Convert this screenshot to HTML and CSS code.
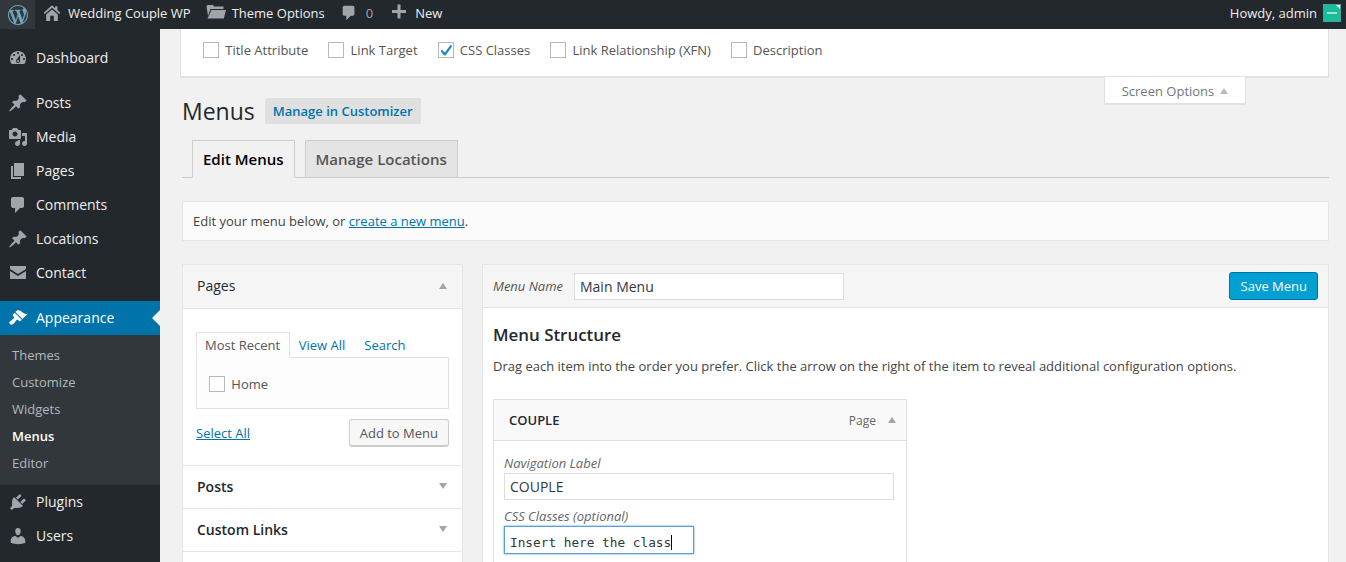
FILE: index.html
```html
<!DOCTYPE html>
<html lang="en">
<head>
    <meta charset="UTF-8">
    <title>Menus - Wedding Couple WP</title>
    <link rel="stylesheet" href="styles.css">
</head>
<body>
    <div class="adminbar">
        <div class="bar-logo">
            <svg class="wp-logo" viewBox="0 0 20 20"><path d="M20 10c0-5.51-4.49-10-10-10C4.48 0 0 4.49 0 10c0 5.52 4.48 10 10 10 5.51 0 10-4.48 10-10zM7.78 15.37L4.37 6.22c.55-.02 1.17-.08 1.17-.08.5-.06.44-1.13-.06-1.11 0 0-1.45.11-2.37.11-.18 0-.37 0-.58-.01C4.12 2.69 6.87 1.11 10 1.11c2.33 0 4.45.87 6.05 2.34-.68-.11-1.65.39-1.65 1.58 0 .74.45 1.36.9 2.1.35.61.55 1.36.55 2.46 0 1.49-1.4 5-1.4 5l-3.03-8.37c.54-.02.82-.17.82-.17.5-.05.44-1.25-.06-1.22 0 0-1.44.12-2.38.12-.87 0-2.33-.12-2.33-.12-.5-.03-.56 1.2-.06 1.22l.92.08 1.26 3.41zM17.41 10c.24-.64.74-1.87.43-4.25.7 1.29 1.05 2.71 1.05 4.25 0 3.29-1.73 6.24-4.4 7.78.97-2.59 1.94-5.2 2.92-7.78zM6.1 18.09C3.12 16.65 1.11 13.53 1.11 10c0-1.3.23-2.48.72-3.59C3.25 10.3 4.67 14.2 6.1 18.09zm4.03-6.63l2.58 6.98c-.86.29-1.76.45-2.71.45-.79 0-1.57-.11-2.29-.33.81-2.38 1.62-4.74 2.42-7.1z"/></svg>
        </div>
        <div class="bar-item">
            <svg class="bar-icon" viewBox="0 0 20 20"><path d="M10 1.5L.8 9.6 2 11l8-6.9 8 6.9 1.2-1.4-3.2-2.8V2.5h-2.5v2.1zM3.5 11.6L10 6l6.5 5.6V19H12v-6H8v6H3.500z"/></svg>
            <span>Wedding Couple WP</span>
        </div>
        <div class="bar-item bar-item-folder">
            <svg class="bar-icon bar-icon-big" viewBox="0 0 20 20"><path d="M.5 3.5l1-1.500h5.500l1 1.500h9.500v2.500H4.500L2 13zM5.500 7H20l-2.200 8.500H1.500z"/></svg>
            <span>Theme Options</span>
        </div>
        <div class="bar-item bar-item-comments">
            <svg class="bar-icon" viewBox="0 0 20 20"><path d="M5 2h9c1.100 0 2 .9 2 2v7c0 1.100-.9 2-2 2h-2l-5 5v-5H5c-1.100 0-2-.9-2-2V4c0-1.100.9-2 2-2z"/></svg>
            <span class="bar-count">0</span>
        </div>
        <div class="bar-item bar-item-new">
            <svg class="bar-icon bar-icon-big" viewBox="0 0 20 20"><path d="M17 7v3h-5.500v5.500h-3V10H3V7h5.500V1.500h3V7z"/></svg>
            <span>New</span>
        </div>
        <div class="bar-user">
            <span>Howdy, admin</span>
            <div class="avatar"><div class="avatar-mark"></div></div>
        </div>
    </div>

    <div class="layout">
        <div class="sidebar">
            <div class="menu-group">
                <div class="menu-item">
                    <svg class="menu-icon" viewBox="0 0 20 20"><path d="M3.760 16h12.480c1.100-1.370 1.760-3.110 1.760-5 0-4.420-3.580-8-8-8s-8 3.580-8 8c0 1.890.66 3.630 1.760 5zM10 4c.55 0 1 .45 1 1s-.45 1-1 1-1-.45-1-1 .45-1 1-1zM6 6c.55 0 1 .45 1 1s-.45 1-1 1-1-.45-1-1 .45-1 1-1zm8 0c.55 0 1 .45 1 1s-.45 1-1 1-1-.45-1-1 .45-1 1-1zm-5.370 5.550L12 7v6c0 1.100-.9 2-2 2s-2-.9-2-2c0-.57.24-1.080.63-1.450zM4 10c.55 0 1 .45 1 1s-.45 1-1 1-1-.45-1-1 .45-1 1-1zm12 0c.55 0 1 .45 1 1s-.45 1-1 1-1-.45-1-1 .45-1 1-1zm-5 3c0-.55-.45-1-1-1s-1 .45-1 1 .45 1 1 1 1-.45 1-1z"/></svg>
                    <span>Dashboard</span>
                </div>
            </div>
            <div class="menu-group">
                <div class="menu-item">
                    <svg class="menu-icon" viewBox="0 0 20 20"><path d="M10.440 3.020l1.820-1.820 6.360 6.350-1.830 1.820c-1.050-.68-2.480-.57-3.410.36l-.75.75c-.92.93-1.040 2.350-.35 3.410l-1.830 1.820-2.410-2.410-2.800 2.790c-.42.42-3.380 2.710-3.800 2.290s1.860-3.390 2.280-3.810l2.790-2.790L4.100 9.360l1.830-1.820c1.050.69 2.480.57 3.400-.36l.75-.75c.93-.92 1.050-2.350.36-3.410z"/></svg>
                    <span>Posts</span>
                </div>
                <div class="menu-item">
                    <svg class="menu-icon" viewBox="0 0 20 20"><path d="M13 11V4c0-.55-.45-1-1-1h-1.670L9 1H5L3.670 3H2c-.55 0-1 .45-1 1v7c0 .55.45 1 1 1h10c.55 0 1-.45 1-1zM7 4.500c1.380 0 2.500 1.120 2.500 2.500S8.380 9.500 7 9.500 4.500 8.380 4.500 7 5.620 4.500 7 4.500zM14 6h5v10.500c0 1.380-1.120 2.500-2.500 2.500S14 17.880 14 16.500s1.120-2.500 2.500-2.500c.17 0 .34.02.5.05V9h-3V6zm-4 8.050V13h2v3.500c0 1.380-1.120 2.500-2.500 2.500S7 17.880 7 16.500 8.120 14 9.500 14c.17 0 .34.02.5.05z"/></svg>
                    <span>Media</span>
                </div>
                <div class="menu-item">
                    <svg class="menu-icon" viewBox="0 0 20 20"><path d="M6 15V2h10v13H6zm-1 1h8v2H3V5h2v11z"/></svg>
                    <span>Pages</span>
                </div>
                <div class="menu-item">
                    <svg class="menu-icon" viewBox="0 0 20 20"><path d="M5 2h9c1.100 0 2 .9 2 2v7c0 1.100-.9 2-2 2h-2l-5 5v-5H5c-1.100 0-2-.9-2-2V4c0-1.100.9-2 2-2z"/></svg>
                    <span>Comments</span>
                </div>
                <div class="menu-item">
                    <svg class="menu-icon" viewBox="0 0 20 20"><path d="M10.440 3.020l1.820-1.820 6.360 6.350-1.830 1.820c-1.050-.68-2.480-.57-3.410.36l-.75.75c-.92.93-1.040 2.350-.35 3.410l-1.830 1.820-2.410-2.410-2.800 2.790c-.42.42-3.380 2.710-3.800 2.290s1.860-3.390 2.280-3.810l2.790-2.790L4.100 9.360l1.830-1.820c1.050.69 2.480.57 3.400-.36l.75-.75c.93-.92 1.050-2.350.36-3.410z"/></svg>
                    <span>Locations</span>
                </div>
                <div class="menu-item">
                    <svg class="menu-icon" viewBox="0 0 20 20"><path d="M2 3h16v3l-8 5-8-5zM2 8l8 5 8-5v8H2z"/></svg>
                    <span>Contact</span>
                </div>
            </div>
            <div class="menu-item menu-current">
                <svg class="menu-icon" viewBox="0 0 20 20"><path d="M14.480 11.060L7.410 3.990l1.500-1.500c.5-.56 2.300-.47 3.510.32 1.210.8 1.430 1.280 2.910 2.100 1.180.64 2.450 1.260 4.450.85zm-.71.71L6.700 4.700 4.930 6.470c-.39.39-.39 1.020 0 1.410l1.060 1.060c.39.39.39 1.030 0 1.420-.6.6-1.430 1.110-2.210 1.690-.35.26-.7.53-1.010.84C1.430 13.230.76 14.820 1.960 16c1.200 1.200 2.770.54 4.120-.82.31-.31.58-.66.84-1.010.58-.78 1.090-1.610 1.690-2.210.39-.39 1.030-.39 1.420 0l1.060 1.060c.39.39 1.020.39 1.410 0z"/></svg>
                <span>Appearance</span>
            </div>
            <div class="submenu">
                <div class="sub-item">Themes</div>
                <div class="sub-item">Customize</div>
                <div class="sub-item">Widgets</div>
                <div class="sub-item sub-current">Menus</div>
                <div class="sub-item">Editor</div>
            </div>
            <div class="menu-item">
                <svg class="menu-icon" viewBox="0 0 20 20"><path d="M13.110 4.360L9.870 7.600 8 5.730l3.240-3.240c.35-.34 1.050-.2 1.560.32.52.51.66 1.210.31 1.550zm-8 1.770l.91-1.120 9.010 9.010-1.190.84c-.71.71-2.630 1.160-3.820 1.160H6.140L4.900 17.260c-.59.59-1.540.59-2.120 0-.59-.58-.59-1.530 0-2.120l1.240-1.240v-3.880c0-1.130.4-3.190 1.090-3.890zm7.260 3.970l3.240-3.240c.34-.35 1.040-.21 1.550.31.52.51.66 1.210.31 1.550l-3.240 3.250z"/></svg>
                <span>Plugins</span>
            </div>
            <div class="menu-item">
                <svg class="menu-icon" viewBox="0 0 20 20"><path d="M10 9.250c-2.270 0-2.730-3.440-2.730-3.440C7 4.020 7.820 2 9.970 2c2.160 0 2.980 2.020 2.710 3.810 0 0-.41 3.440-2.680 3.440zm0 2.570L12.720 10c2.390 0 4.520 2.330 4.520 4.530v2.490s-3.650 1.130-7.240 1.130c-3.650 0-7.240-1.130-7.240-1.130v-2.490c0-2.250 1.940-4.480 4.470-4.480z"/></svg>
                <span>Users</span>
            </div>
        </div>

        <div class="content">
            <div class="screen-meta">
                <div class="check-row">
                    <label class="check-label"><span class="checkbox"></span>Title Attribute</label>
                    <label class="check-label"><span class="checkbox"></span>Link Target</label>
                    <label class="check-label">
                        <span class="checkbox">
                            <svg class="tick" viewBox="0 0 16 16"><path d="M12.600 2.800l1.700 1.200-6.700 9.400H6.200L2.600 9.200 4 7.800l2.900 2.600z"/></svg>
                        </span>CSS Classes
                    </label>
                    <label class="check-label"><span class="checkbox"></span>Link Relationship (XFN)</label>
                    <label class="check-label"><span class="checkbox"></span>Description</label>
                </div>
            </div>
            <div class="screen-tab-row">
                <div class="screen-tab">Screen Options<span class="arrow-up arrow-light"></span></div>
            </div>

            <div class="wrap">
                <div class="title-row">
                    <h1>Menus</h1>
                    <a class="title-action">Manage in Customizer</a>
                </div>
                <div class="nav-tabs">
                    <div class="nav-tab nav-tab-active">Edit Menus</div>
                    <div class="nav-tab">Manage Locations</div>
                </div>
                <div class="notice">Edit your menu below, or <a class="link">create a new menu</a>.</div>

                <div class="columns">
                    <div class="col-left">
                        <div class="acc-head acc-open">
                            <span>Pages</span><span class="arrow-up"></span>
                        </div>
                        <div class="acc-body">
                            <div class="tabs">
                                <div class="tab tab-active">Most Recent</div>
                                <div class="tab tab-link">View All</div>
                                <div class="tab tab-link">Search</div>
                            </div>
                            <div class="tab-panel">
                                <label class="check-label"><span class="checkbox"></span>Home</label>
                            </div>
                            <div class="acc-actions">
                                <a class="link">Select All</a>
                                <div class="btn">Add to Menu</div>
                            </div>
                        </div>
                        <div class="acc-head">
                            <span>Posts</span><span class="arrow-down"></span>
                        </div>
                        <div class="acc-head">
                            <span>Custom Links</span><span class="arrow-down"></span>
                        </div>
                        <div class="acc-rest"></div>
                    </div>

                    <div class="col-right">
                        <div class="menu-head">
                            <span class="menu-name-label">Menu Name</span>
                            <div class="field field-name">Main Menu</div>
                            <div class="btn-primary">Save Menu</div>
                        </div>
                        <div class="menu-body">
                            <h3>Menu Structure</h3>
                            <p class="hint">Drag each item into the order you prefer. Click the arrow on the right of the item to reveal additional configuration options.</p>
                            <div class="item">
                                <div class="item-bar">
                                    <span class="item-title">COUPLE</span>
                                    <span class="item-type">Page</span>
                                    <span class="arrow-up"></span>
                                </div>
                                <div class="item-settings">
                                    <div class="field-label">Navigation Label</div>
                                    <div class="field field-wide">COUPLE</div>
                                    <div class="field-label field-label-second">CSS Classes (optional)</div>
                                    <div class="field field-focus"><span class="caret">Insert here the class</span></div>
                                </div>
                            </div>
                        </div>
                    </div>
                </div>
            </div>
        </div>
    </div>
</body>
</html>
```
FILE: styles.css
```css
* {
    padding: 0px;
    margin: 0px;
    box-sizing: border-box;
}
html, body {
    height: 562px;
    overflow: hidden;
}
body {
    background-color: #f1f1f1;
    color: #444;
    font-family: "Open Sans", sans-serif;
    font-size: 13px;
}

/* top bar */
.adminbar {
    height: 29px;
    background-color: #23282d;
    color: #eee;
    display: flex;
    align-items: flex-start;
    font-size: 13px;
}
.bar-logo {
    width: 35px;
    height: 29px;
    background-color: #32373c;
    display: flex;
    align-items: center;
    justify-content: center;
    margin-right: 8px;
}
.wp-logo {
    width: 20px;
    height: 20px;
    fill: #6ea7bd;
}
.bar-item {
    height: 26px;
    display: flex;
    align-items: center;
    gap: 7px;
    margin-right: 15px;
}
.bar-item-folder {
    gap: 6px;
}
.bar-item-comments {
    gap: 8px;
    margin-right: 16px;
}
.bar-item-new {
    gap: 6px;
}
.bar-icon {
    width: 18px;
    height: 18px;
    fill: #a0a5aa;
}
.bar-icon-big {
    width: 20px;
    height: 20px;
}
.bar-count {
    color: #a0a5aa;
}
.bar-user {
    height: 26px;
    margin-left: auto;
    margin-right: 5px;
    display: flex;
    align-items: center;
    gap: 6px;
}
.avatar {
    width: 18px;
    height: 18px;
    background-color: #1abc9c;
    border: 1px solid #3fa892;
    display: flex;
    align-items: center;
    justify-content: center;
    position: relative;
}
.avatar::after {
    content: "";
    position: absolute;
    top: 0px;
    right: 0px;
    border-top: 4px solid #fff;
    border-left: 4px solid transparent;
}
.avatar-mark {
    width: 10px;
    height: 2px;
    background-color: #9fe3d2;
}

/* left menu */
.layout {
    display: flex;
    height: 533px;
}
.sidebar {
    width: 160px;
    flex-shrink: 0;
    background-color: #23282d;
    padding-top: 12px;
}
.menu-group {
    margin-bottom: 11px;
}
.menu-item {
    height: 34px;
    display: flex;
    align-items: center;
    color: #eee;
    font-size: 14px;
    padding-left: 8px;
    position: relative;
}
.menu-item span {
    padding-bottom: 2px;
}
.menu-icon {
    width: 20px;
    height: 20px;
    fill: #a0a5aa;
    margin-right: 8px;
}
.menu-current {
    background-color: #0073aa;
    color: #fff;
}
.menu-current .menu-icon {
    fill: #fff;
}
.menu-current::after {
    content: "";
    position: absolute;
    right: 0px;
    top: 9px;
    border: 8px solid transparent;
    border-right-color: #f1f1f1;
    border-left-width: 0px;
}
.submenu {
    background-color: #32373c;
    padding: 7px 0px 8px;
}
.sub-item {
    height: 27px;
    line-height: 27px;
    padding-left: 12px;
    color: #b4b9be;
    font-size: 13px;
}
.sub-current {
    color: #fff;
    font-weight: 600;
}

/* screen options */
.content {
    flex: 1;
    min-width: 0;
    padding: 0px 17px 0px 20px;
}
.screen-meta {
    height: 49px;
    background-color: #fff;
    border: 1px solid #e1e1e1;
    border-top: none;
    border-bottom-width: 2px;
    padding: 0px 22px 5px;
    display: flex;
    align-items: center;
}
.check-row {
    display: flex;
    gap: 20px;
}
.check-label {
    display: flex;
    align-items: center;
    gap: 6.3px;
    color: #555;
}
.checkbox {
    width: 16px;
    height: 16px;
    background-color: #fff;
    border: 1px solid #b4b9be;
    position: relative;
    display: block;
    flex-shrink: 0;
}
.tick {
    width: 16px;
    height: 16px;
    fill: #1e8cbe;
    position: absolute;
    left: -1px;
    top: -1px;
}
.screen-tab-row {
    display: flex;
    justify-content: flex-end;
    height: 0px;
    padding-right: 83px;
}
.screen-tab {
    width: 142px;
    height: 28px;
    background-color: #fff;
    border: 1px solid #e1e1e1;
    border-top: none;
    border-bottom-width: 2px;
    margin-top: -1px;
    padding-top: 2px;
    color: #72777c;
    display: flex;
    align-items: center;
    justify-content: center;
    gap: 6px;
}
.arrow-up {
    width: 0px;
    height: 0px;
    border: 4px solid transparent;
    border-top: none;
    border-bottom: 6px solid #a0a5aa;
}
.arrow-light {
    border-bottom-color: #b4b9be;
}
.arrow-down {
    width: 0px;
    height: 0px;
    border: 4px solid transparent;
    border-bottom: none;
    border-top: 6px solid #a0a5aa;
}

/* page heading */
.wrap {
    padding-left: 2px;
}
.title-row {
    display: flex;
    align-items: center;
    gap: 10px;
    height: 26px;
    margin-top: 20px;
}
h1 {
    font-size: 23px;
    font-weight: 400;
    color: #23282d;
}
.title-action {
    height: 26px;
    line-height: 26px;
    padding: 0px 8px;
    background-color: #e0e0e0;
    color: #0073aa;
    font-weight: 600;
    border-radius: 2px;
}
.nav-tabs {
    display: flex;
    gap: 10px;
    margin-top: 16px;
    padding-left: 10px;
    height: 38px;
    border-bottom: 1px solid #ccc;
}
.nav-tab {
    height: 38px;
    line-height: 37px;
    padding: 0px 10px;
    background-color: #e4e4e4;
    border: 1px solid #ccc;
    color: #555;
    font-size: 15px;
    font-weight: 600;
}
.nav-tab-active {
    background-color: #f1f1f1;
    border-bottom-color: #f1f1f1;
    color: #000;
}
.notice {
    margin-top: 23px;
    height: 40px;
    line-height: 38px;
    background-color: #fbfbfb;
    border: 1px solid #e5e5e5;
    padding-left: 10px;
}
.link {
    color: #0073aa;
    text-decoration: underline;
}

/* two columns */
.columns {
    display: flex;
    gap: 19px;
    margin-top: 23px;
    align-items: flex-start;
}
.col-left {
    width: 281px;
    flex-shrink: 0;
    background-color: #fff;
    border: 1px solid #e5e5e5;
    border-bottom: none;
}
.acc-head {
    height: 43px;
    display: flex;
    align-items: center;
    justify-content: space-between;
    padding: 0px 15px 2px 14px;
    font-size: 14px;
    font-weight: 600;
    color: #23282d;
    border-bottom: 1px solid #e5e5e5;
}
.acc-open {
    height: 44px;
    background-color: #f5f5f5;
    font-weight: 400;
}
.acc-rest {
    height: 20px;
}
.acc-body {
    height: 157px;
    padding: 23px 13px 0px;
    border-bottom: 1px solid #e5e5e5;
}
.tabs {
    display: flex;
    height: 25px;
}
.tab {
    padding: 0px 9.5px;
    line-height: 27px;
}
.tab-active {
    padding: 0px 9px 0px 8px;
    margin-right: -1px;
    line-height: 25px;
    border: 1px solid #e1e1e1;
    border-bottom-color: #fdfdfd;
    background-color: #fdfdfd;
    color: #555;
    position: relative;
    height: 26px;
    z-index: 1;
}
.tab-link {
    color: #0073aa;
}
.tab-panel {
    height: 52px;
    background-color: #fdfdfd;
    border: 1px solid #e1e1e1;
    padding-left: 12px;
    padding-top: 2px;
    display: flex;
    align-items: center;
}
.acc-actions {
    display: flex;
    align-items: center;
    justify-content: space-between;
    margin-top: 10px;
}
.btn {
    height: 28px;
    line-height: 26px;
    padding: 0px 10px;
    background-color: #f7f7f7;
    border: 1px solid #ccc;
    border-bottom-width: 2px;
    border-radius: 3px;
    color: #555;
}
.col-right {
    flex: 1;
    min-width: 0;
    height: 320px;
    background-color: #fff;
    border: 1px solid #e5e5e5;
}
.menu-head {
    height: 43px;
    background-color: #f5f5f5;
    border-bottom: 1px solid #e5e5e5;
    display: flex;
    align-items: center;
    padding: 0px 10px;
}
.menu-name-label {
    font-style: italic;
    color: #555;
    width: 81px;
}
.field {
    height: 27px;
    line-height: 25px;
    background-color: #fff;
    border: 1px solid #ddd;
    padding: 0px 5px;
    font-size: 14px;
    color: #32373c;
}
.field-name {
    width: 270px;
}
.btn-primary {
    margin-left: auto;
    height: 28px;
    line-height: 26px;
    padding: 0px 10px 0px 11px;
    background-color: #00a0d2;
    border: 1px solid #0073aa;
    border-radius: 3px;
    color: #fff;
}
.menu-body {
    padding: 15px 10px 0px;
}
h3 {
    font-size: 16.9px;
    font-weight: 600;
    color: #23282d;
    line-height: 24px;
}
.hint {
    margin-top: 9px;
    line-height: 20px;
    color: #444;
}
.item {
    width: 414px;
    margin-top: 23px;
    border: 1px solid #dfdfdf;
}
.item-bar {
    height: 41px;
    background-color: #f9f9f9;
    border-bottom: 1px solid #dfdfdf;
    display: flex;
    align-items: center;
    padding: 0px 10px 0px 15px;
}
.item-title {
    font-weight: 600;
    font-size: 13px;
    color: #23282d;
    margin-right: auto;
}
.item-type {
    font-size: 12px;
    color: #666;
    margin-right: 12px;
}
.item-settings {
    padding: 13px 10px 12px;
}
.field-label {
    font-size: 13px;
    font-style: italic;
    color: #666;
    line-height: 18px;
    margin-bottom: 1px;
}
.field-label-second {
    margin-top: 7px;
}
.field-wide {
    width: 390px;
}
.field-focus {
    width: 190px;
    height: 28px;
    padding-top: 4px;
    display: flex;
    align-items: center;
    border-color: #5b9dd9;
    box-shadow: 0px 0px 2px rgba(30, 140, 190, 0.8);
    font-family: "DejaVu Sans Mono", monospace;
    font-size: 12.75px;
}
.caret {
    border-right: 1px solid #000;
    line-height: 15px;
}
```
